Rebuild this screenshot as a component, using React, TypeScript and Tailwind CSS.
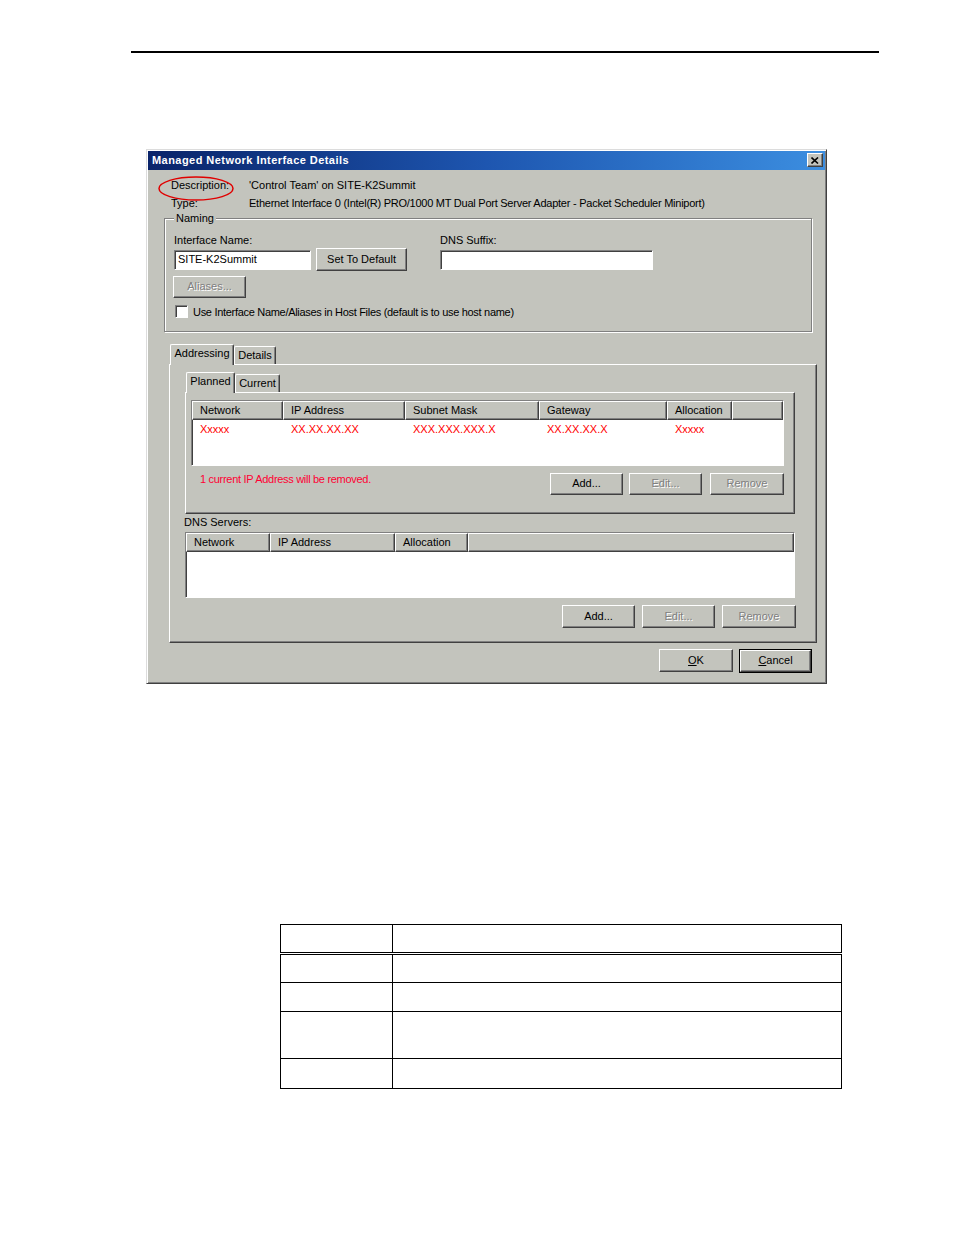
import React from "react";

const font = "font-['Liberation_Sans',Arial,sans-serif]";
const raised =
  "border border-t-white border-l-white border-r-[#404040] border-b-[#404040] shadow-[inset_-1px_-1px_0_#808080]";
const sunken =
  "border border-t-[#808080] border-l-[#808080] border-r-white border-b-white shadow-[inset_1px_1px_0_#404040]";

function Btn({
  children,
  className = "",
  disabled,
  isDefault,
}: {
  children: React.ReactNode;
  className?: string;
  disabled?: boolean;
  isDefault?: boolean;
}) {
  const inner = (
    <div
      className={`${raised} h-full w-full flex items-center justify-center text-[11px] ${
        disabled ? "text-[#808080] [text-shadow:1px_1px_0_#fff]" : "text-black"
      }`}
    >
      {children}
    </div>
  );
  if (isDefault) {
    return <div className={`border border-black ${className}`}>{inner}</div>;
  }
  return <div className={className}>{inner}</div>;
}

function HeaderCell({ label, className = "" }: { label?: string; className?: string }) {
  return (
    <div className={`${raised} h-[19px] pl-[7px] text-[11px] leading-[17px] shrink-0 ${className}`}>
      {label}
    </div>
  );
}

function ListView({
  columns,
  rows,
  className = "",
}: {
  columns: { label: string; w: string }[];
  rows: string[][];
  className?: string;
}) {
  return (
    <div className={`${sunken} bg-white flex flex-col ${className}`}>
      <div className="flex bg-[#c3c4bd]">
        {columns.map((c) => (
          <HeaderCell key={c.label} label={c.label} className={c.w} />
        ))}
        <HeaderCell className="flex-1" />
      </div>
      {rows.map((r, i) => (
        <div key={i} className="flex h-[20px] items-center">
          {r.map((cell, j) => (
            <div key={j} className={`${columns[j].w} shrink-0 pl-[8px] text-[11px] text-[#ff0000]`}>
              {cell}
            </div>
          ))}
        </div>
      ))}
    </div>
  );
}

function Tab({
  label,
  selected,
  className = "",
}: {
  label: string;
  selected?: boolean;
  className?: string;
}) {
  return (
    <div
      className={`border border-b-0 border-t-white border-l-white border-r-[#404040] shadow-[inset_-1px_0_0_#808080] rounded-tl-[2px] rounded-tr-[2px] bg-[#c3c4bd] text-[11px] flex items-center justify-center ${
        selected ? "h-[21px] relative z-10 -mb-px pb-[3px]" : "h-[18px]"
      } ${className}`}
    >
      {label}
    </div>
  );
}

function Dialog() {
  return (
    <div
      className={`relative ml-[146px] mt-[96px] w-[681px] h-[535px] bg-[#c3c4bd] border border-t-[#dcdcdc] border-l-[#dcdcdc] border-r-[#404040] border-b-[#404040] shadow-[inset_1px_1px_0_#fff,inset_-1px_-1px_0_#808080] p-[1px] flex flex-col text-black ${font}`}
    >
      {/* title bar */}
      <div className="h-[19px] bg-gradient-to-r from-[#0a246a] via-[#1e56b0] to-[#3c8ee0] flex items-center justify-between pl-[4px] pr-[2px]">
        <span className="text-white font-bold text-[11px] tracking-[0.45px]">
          Managed Network Interface Details
        </span>
        <div className={`${raised} bg-[#c3c4bd] w-[16px] h-[14px] flex items-center justify-center`}>
          <svg width="8" height="7" viewBox="0 0 8 7">
            <path d="M0.5 0.5 L7 6.5 M7 0.5 L0.5 6.5" stroke="#000" strokeWidth="1.6" />
          </svg>
        </div>
      </div>

      {/* description / type */}
      <div className="mt-[7px] flex h-[18px] items-center text-[11px]">
        <span className="ml-[23px] w-[78px]">Description:</span>
        <span>'Control Team' on SITE-K2Summit</span>
      </div>
      <div className="flex h-[18px] items-center text-[11px] tracking-[-0.25px]">
        <span className="ml-[23px] w-[78px] tracking-normal">Type:</span>
        <span>
          Ethernet Interface 0 (Intel(R) PRO/1000 MT Dual Port Server Adapter - Packet Scheduler Miniport)
        </span>
      </div>

      {/* naming group */}
      <div className="relative ml-[16px] mt-[5px] w-[648px] h-[114px] border border-[#808080] shadow-[inset_1px_1px_0_#fff,1px_1px_0_#fff] pl-[9px] pt-[15px]">
        <span className="absolute left-[9px] -top-[7px] px-[2px] bg-[#c3c4bd] text-[11px] leading-[13px]">
          Naming
        </span>
        <div className="flex">
          <div className="w-[266px] shrink-0">
            <div className="text-[11px] leading-[13px]">Interface Name:</div>
            <div className="mt-[2px] flex items-center h-[22px] gap-[5px]">
              <div className={`${sunken} bg-white w-[137px] h-[20px] text-[11px] leading-[17px] pl-[3px]`}>
                SITE-K2Summit
              </div>
              <Btn className="w-[91px] h-[23px]">Set To Default</Btn>
            </div>
          </div>
          <div>
            <div className="text-[11px] leading-[13px]">DNS Suffix:</div>
            <div className="mt-[2px] flex items-center h-[22px]">
              <div className={`${sunken} bg-white w-[213px] h-[20px]`} />
            </div>
          </div>
        </div>
        <Btn disabled className="mt-[5px] -ml-px w-[73px] h-[22px]">
          Aliases...
        </Btn>
        <div className="mt-[6px] flex items-center gap-[5px] ml-[1px]">
          <div className={`${sunken} bg-white w-[13px] h-[13px]`} />
          <span className="text-[11px] tracking-[-0.3px]">
            Use Interface Name/Aliases in Host Files (default is to use host name)
          </span>
        </div>
      </div>

      {/* tab control */}
      <div className="ml-[21px] mt-[12px] w-[648px]">
        <div className="flex items-end pl-[1px]">
          <Tab label="Addressing" selected className="w-[64px]" />
          <Tab label="Details" className="w-[42px]" />
        </div>
        <div className={`${raised} bg-[#c3c4bd] h-[279px] pl-[15px] pt-[7px]`}>
          <div className="flex items-end pl-[1px]">
            <Tab label="Planned" selected className="w-[49px]" />
            <Tab label="Current" className="w-[45px]" />
          </div>
          <div className={`${raised} w-[610px] h-[122px] px-[5px] pt-[7px]`}>
            <ListView
              className="w-[593px] h-[66px]"
              columns={[
                { label: "Network", w: "w-[91px]" },
                { label: "IP Address", w: "w-[122px]" },
                { label: "Subnet Mask", w: "w-[134px]" },
                { label: "Gateway", w: "w-[128px]" },
                { label: "Allocation", w: "w-[65px]" },
              ]}
              rows={[["Xxxxx", "XX.XX.XX.XX", "XXX.XXX.XXX.X", "XX.XX.XX.X", "Xxxxx"]]}
            />
            <div className="mt-[7px] w-[593px] flex items-start">
              <span className="ml-[9px] text-[11px] leading-[13px] tracking-[-0.3px] text-[#ff0033] flex-1">
                1 current IP Address will be removed.
              </span>
              <Btn className="w-[73px] h-[22px]">Add...</Btn>
              <Btn disabled className="ml-[6px] w-[73px] h-[22px]">
                Edit...
              </Btn>
              <Btn disabled className="ml-[8px] w-[74px] h-[22px]">
                Remove
              </Btn>
            </div>
          </div>
          <div className="mt-[2px] text-[11px] leading-[13px] -ml-px">DNS Servers:</div>
          <ListView
            className="mt-[3px] w-[610px] h-[66px]"
            columns={[
              { label: "Network", w: "w-[84px]" },
              { label: "IP Address", w: "w-[125px]" },
              { label: "Allocation", w: "w-[73px]" },
            ]}
            rows={[]}
          />
          <div className="mt-[7px] w-[611px] flex justify-end">
            <Btn className="w-[73px] h-[23px]">Add...</Btn>
            <Btn disabled className="ml-[7px] w-[73px] h-[23px]">
              Edit...
            </Btn>
            <Btn disabled className="ml-[7px] w-[74px] h-[23px]">
              Remove
            </Btn>
          </div>
        </div>
      </div>

      {/* ok / cancel */}
      <div className="mt-[6px] flex justify-end pr-[13px]">
        <Btn className="w-[74px] h-[23px]">
          <span>
            <u>O</u>K
          </span>
        </Btn>
        <Btn isDefault className="ml-[6px] w-[73px] h-[24px]">
          <span>
            <u>C</u>ancel
          </span>
        </Btn>
      </div>

      {/* red annotation */}
      <svg className="absolute left-[10px] top-[25px]" width="78" height="27" viewBox="0 0 78 27">
        <ellipse cx="39" cy="13.5" rx="37" ry="11.5" fill="none" stroke="#e00000" strokeWidth="1.5" />
      </svg>
    </div>
  );
}

function EmptyTable() {
  const rows = ["h-[29px]", "h-[29px]", "h-[47px]", "h-[30px]"];
  return (
    <table className="ml-[280px] mt-[240px] w-[562px] border-collapse">
      <tbody>
        <tr className="h-[29px] border-b-[3px] border-double border-black">
          <td className="w-[112px] border-[1.5px] border-black" />
          <td className="border-[1.5px] border-black" />
        </tr>
        {rows.map((h, i) => (
          <tr key={i} className={h}>
            <td className="border-[1.5px] border-black" />
            <td className="border-[1.5px] border-black" />
          </tr>
        ))}
      </tbody>
    </table>
  );
}

export default function App() {
  return (
    <div className="w-[954px] min-h-[1235px] bg-white pt-[51px]">
      <div className="ml-[131px] w-[748px] h-[1.5px] bg-black" />
      <Dialog />
      <EmptyTable />
    </div>
  );
}
